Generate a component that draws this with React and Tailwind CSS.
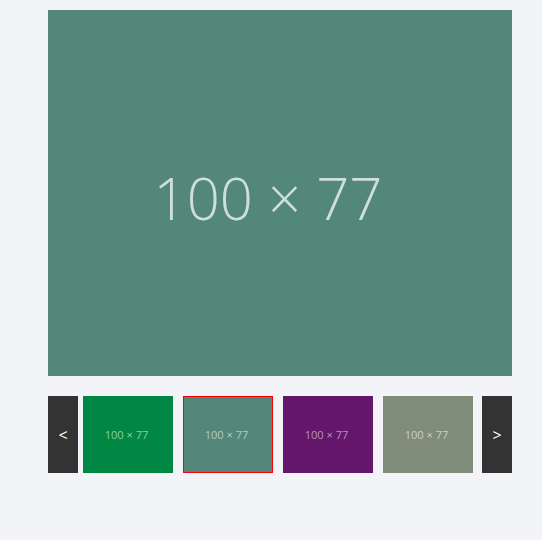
import React, { useState } from "react";

const slides = [
  { id: 1, color: "bg-[#008744]", text: "text-[#8fcbad]" },
  { id: 2, color: "bg-[#52877a]", text: "text-[#b3cdc6]" },
  { id: 3, color: "bg-[#64166b]", text: "text-[#b994bd]" },
  { id: 4, color: "bg-[#7f8c7a]", text: "text-[#c9cfc6]" },
];

const App = () => {
  const [active, setActive] = useState(1);

  const prev = () => setActive((a) => (a + slides.length - 1) % slides.length);
  const next = () => setActive((a) => (a + 1) % slides.length);

  return (
    <div
      className="w-full min-h-screen bg-[#f3f4f8] pt-[10px]"
      style={{ fontFamily: "'Open Sans', 'Liberation Sans', sans-serif" }}
    >
      <div className="w-[464px] ml-[48px]">
        {/* main image */}
        <div className="w-[464px] h-[366px] bg-[#52877a] flex items-center justify-center">
          <span className="text-[58px] font-light text-[#cfe0db] mt-[8px] mr-[24px] blur-[0.5px]">
            100 × 77
          </span>
        </div>

        {/* thumbnails */}
        <div className="flex mt-[20px] h-[77px]">
          <button
            onClick={prev}
            className="w-[30px] h-[77px] bg-[#333333] text-white text-[16px] flex items-center justify-center"
          >
            &lt;
          </button>
          {slides.map((s, i) => (
            <div
              key={s.id}
              onClick={() => setActive(i)}
              className={
                "w-[90px] h-[77px] mx-[5px] flex items-center justify-center cursor-pointer " +
                s.color +
                (i === active ? " border border-[#ff0000]" : "")
              }
            >
              <span className={"text-[11px] mt-[2px] mr-[3px] " + s.text}>100 × 77</span>
            </div>
          ))}
          <button
            onClick={next}
            className="w-[30px] h-[77px] ml-auto bg-[#333333] text-white text-[16px] flex items-center justify-center"
          >
            &gt;
          </button>
        </div>
      </div>
    </div>
  );
};

export default App;
